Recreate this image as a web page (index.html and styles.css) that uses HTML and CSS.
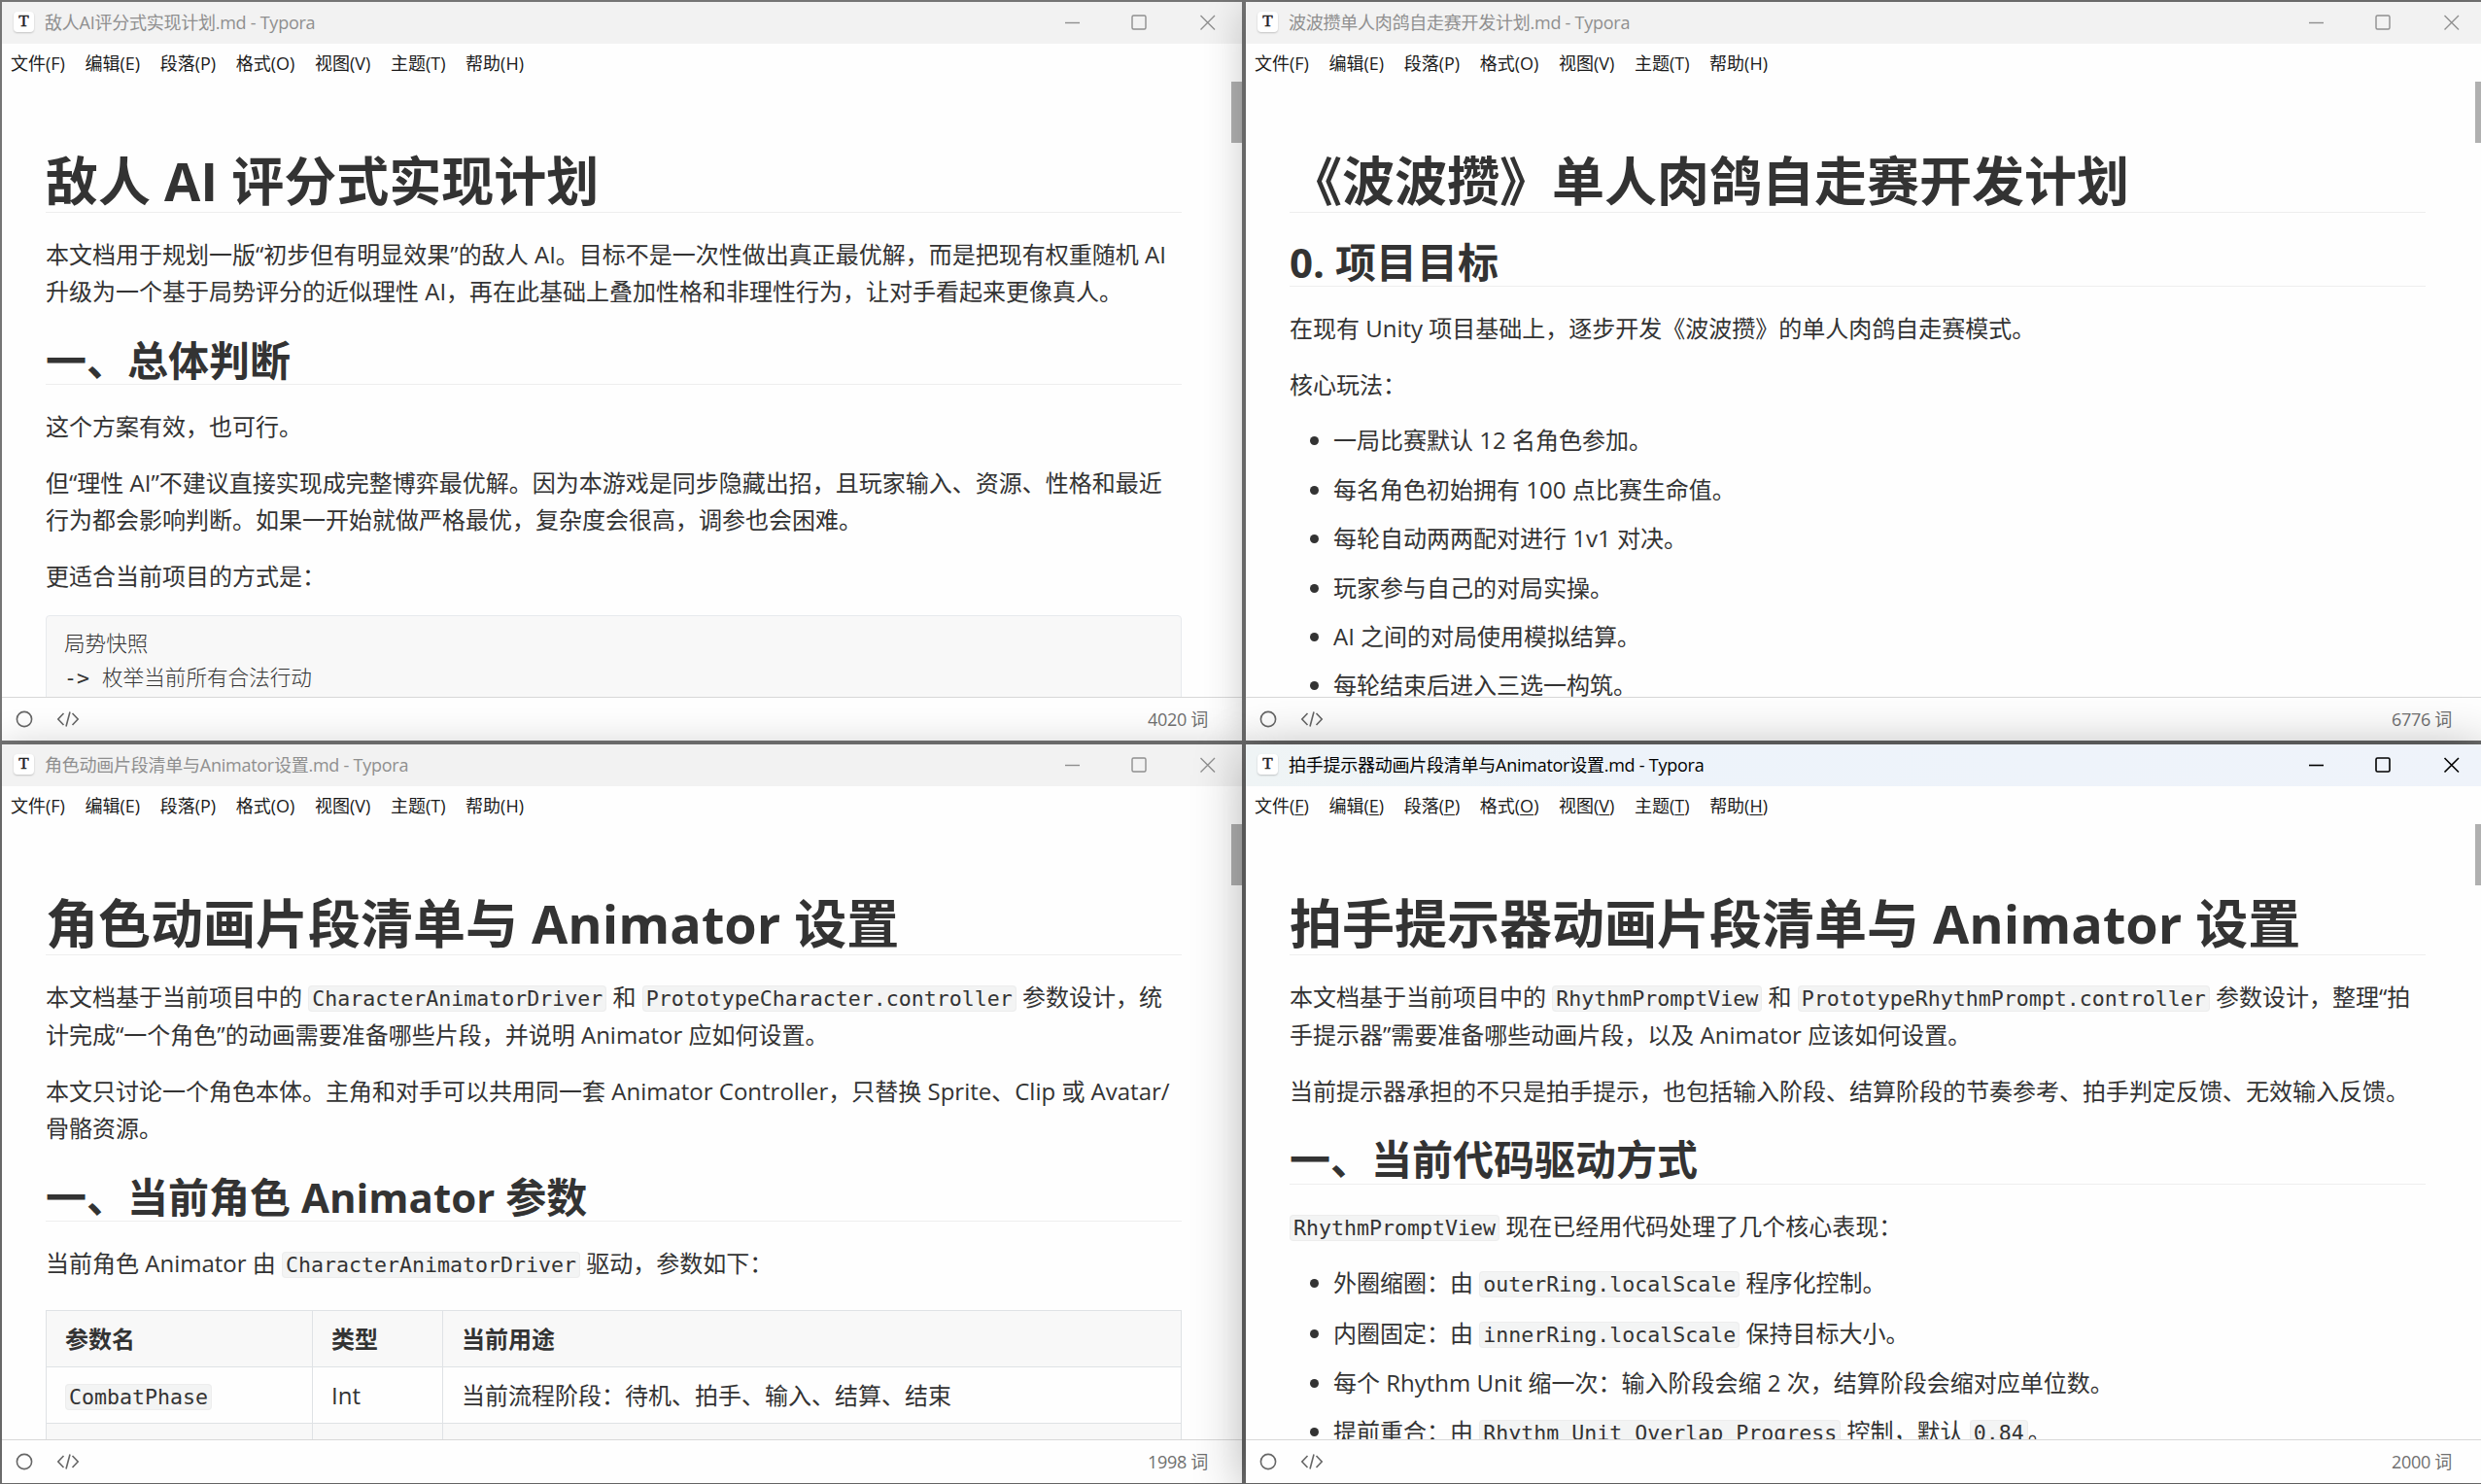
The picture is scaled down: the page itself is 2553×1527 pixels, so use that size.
FILE: index.html
```html
<!DOCTYPE html>
<html lang="zh-CN">
<head>
<meta charset="utf-8">
<title>Typora</title>
<link rel="stylesheet" href="styles.css">
</head>
<body>
<svg class="defs" aria-hidden="true">
  <symbol id="controls" viewBox="0 0 156 18"><path d="M1 9.500H16"/><rect x="70" y="2" width="14" height="14" rx="1.500"/><path d="M140.500 2L155 16.500M155 2L140.500 16.500"/></symbol>
  <symbol id="source" viewBox="0 0 24 18"><path d="M7.500 3L1.800 9L7.500 15M16.500 3L22.200 9L16.500 15M14 1.500L10 16.500"/></symbol>
  <symbol id="outline" viewBox="0 0 18 18"><circle cx="9" cy="9" r="7.600"/></symbol>
</svg>
<main class="desktop">
  <section class="window">
    <header class="titlebar"><span class="logo">T</span><span class="title">敌人AI评分式实现计划.md - Typora</span><svg class="controls"><use href="#controls"/></svg></header>
    <nav class="menu"><span>文件(F)</span><span>编辑(E)</span><span>段落(P)</span><span>格式(O)</span><span>视图(V)</span><span>主题(T)</span><span>帮助(H)</span></nav>
    <article class="write">
      <i class="scroll"></i>
      <h1>敌人 AI 评分式实现计划</h1>
      <p>本文档用于规划一版“初步但有明显效果”的敌人 AI。目标不是一次性做出真正最优解，而是把现有权重随机 AI<br>升级为一个基于局势评分的近似理性 AI，再在此基础上叠加性格和非理性行为，让对手看起来更像真人。</p>
      <h2>一、总体判断</h2>
      <p>这个方案有效，也可行。</p>
      <p>但“理性 AI”不建议直接实现成完整博弈最优解。因为本游戏是同步隐藏出招，且玩家输入、资源、性格和最近<br>行为都会影响判断。如果一开始就做严格最优，复杂度会很高，调参也会困难。</p>
      <p>更适合当前项目的方式是：</p>
      <pre>局势快照
-&gt; 枚举当前所有合法行动
</pre>
    </article>
    <footer class="status"><svg class="ring"><use href="#outline"/></svg><svg class="src"><use href="#source"/></svg><span class="count">4020 词</span></footer>
  </section>

  <section class="window second">
    <header class="titlebar"><span class="logo">T</span><span class="title">波波攒单人肉鸽自走赛开发计划.md - Typora</span><svg class="controls"><use href="#controls"/></svg></header>
    <nav class="menu"><span>文件(F)</span><span>编辑(E)</span><span>段落(P)</span><span>格式(O)</span><span>视图(V)</span><span>主题(T)</span><span>帮助(H)</span></nav>
    <article class="write">
      <i class="scroll"></i>
      <h1>《波波攒》单人肉鸽自走赛开发计划</h1>
      <h2>0. 项目目标</h2>
      <p>在现有 Unity 项目基础上，逐步开发《波波攒》的单人肉鸽自走赛模式。</p>
      <p>核心玩法：</p>
      <ul>
        <li>一局比赛默认 12 名角色参加。</li>
        <li>每名角色初始拥有 100 点比赛生命值。</li>
        <li>每轮自动两两配对进行 1v1 对决。</li>
        <li>玩家参与自己的对局实操。</li>
        <li>AI 之间的对局使用模拟结算。</li>
        <li>每轮结束后进入三选一构筑。</li>
      </ul>
    </article>
    <footer class="status"><svg class="ring"><use href="#outline"/></svg><svg class="src"><use href="#source"/></svg><span class="count">6776 词</span></footer>
  </section>

  <section class="window third">
    <header class="titlebar"><span class="logo">T</span><span class="title">角色动画片段清单与Animator设置.md - Typora</span><svg class="controls"><use href="#controls"/></svg></header>
    <nav class="menu"><span>文件(F)</span><span>编辑(E)</span><span>段落(P)</span><span>格式(O)</span><span>视图(V)</span><span>主题(T)</span><span>帮助(H)</span></nav>
    <article class="write">
      <i class="scroll"></i>
      <h1>角色动画片段清单与 Animator 设置</h1>
      <p>本文档基于当前项目中的 <code>CharacterAnimatorDriver</code> 和 <code>PrototypeCharacter.controller</code> 参数设计，统<br>计完成“一个角色”的动画需要准备哪些片段，并说明 Animator 应如何设置。</p>
      <p>本文只讨论一个角色本体。主角和对手可以共用同一套 Animator Controller，只替换 Sprite、Clip 或 Avatar/<br>骨骼资源。</p>
      <h2>一、当前角色 Animator 参数</h2>
      <p>当前角色 Animator 由 <code>CharacterAnimatorDriver</code> 驱动，参数如下：</p>
      <table>
        <colgroup><col class="c1"><col class="c2"><col></colgroup>
        <thead><tr><th>参数名</th><th>类型</th><th>当前用途</th></tr></thead>
        <tbody>
          <tr><td><code>CombatPhase</code></td><td>Int</td><td>当前流程阶段：待机、拍手、输入、结算、结束</td></tr>
          <tr><td></td><td></td><td></td></tr>
        </tbody>
      </table>
    </article>
    <footer class="status"><svg class="ring"><use href="#outline"/></svg><svg class="src"><use href="#source"/></svg><span class="count">1998 词</span></footer>
  </section>

  <section class="window active">
    <header class="titlebar"><span class="logo">T</span><span class="title">拍手提示器动画片段清单与Animator设置.md - Typora</span><svg class="controls"><use href="#controls"/></svg></header>
    <nav class="menu"><span>文件(<u>F</u>)</span><span>编辑(<u>E</u>)</span><span>段落(<u>P</u>)</span><span>格式(<u>O</u>)</span><span>视图(<u>V</u>)</span><span>主题(<u>T</u>)</span><span>帮助(<u>H</u>)</span></nav>
    <article class="write">
      <i class="scroll"></i>
      <h1>拍手提示器动画片段清单与 Animator 设置</h1>
      <p>本文档基于当前项目中的 <code>RhythmPromptView</code> 和 <code>PrototypeRhythmPrompt.controller</code> 参数设计，整理“拍<br>手提示器”需要准备哪些动画片段，以及 Animator 应该如何设置。</p>
      <p>当前提示器承担的不只是拍手提示，也包括输入阶段、结算阶段的节奏参考、拍手判定反馈、无效输入反馈。</p>
      <h2>一、当前代码驱动方式</h2>
      <p><code>RhythmPromptView</code> 现在已经用代码处理了几个核心表现：</p>
      <ul>
        <li>外圈缩圈：由 <code>outerRing.localScale</code> 程序化控制。</li>
        <li>内圈固定：由 <code>innerRing.localScale</code> 保持目标大小。</li>
        <li>每个 Rhythm Unit 缩一次：输入阶段会缩 2 次，结算阶段会缩对应单位数。</li>
        <li>提前重合：由 <code>Rhythm Unit Overlap Progress</code> 控制，默认 <code>0.84</code>。</li>
      </ul>
    </article>
    <footer class="status"><svg class="ring"><use href="#outline"/></svg><svg class="src"><use href="#source"/></svg><span class="count">2000 词</span></footer>
  </section>
</main>
</body>
</html>
```
FILE: styles.css
```css
* { box-sizing: border-box; }
html, body { margin: 0; height: 100%; overflow: hidden; }
body { background: #757575; font-family: "Open Sans", "Noto Sans CJK SC", sans-serif; }
.defs { display: none; }

.desktop {
  display: grid;
  grid-template: 760px 760px / 1276px 1276px;
  gap: 4px;
  width: 2553px;
  height: 1527px;
  padding: 2px 0 0 2px;
  overflow: hidden;
}

.window {
  position: relative;
  z-index: 1;
  display: flex;
  flex-direction: column;
  min-width: 0;
  min-height: 0;
  background: #fefefe;
  color: #333;
}
.second, .third { z-index: 2; box-shadow: 0 6px 40px rgba(0, 0, 0, .24); }
.active { z-index: 3; box-shadow: 0 6px 50px rgba(0, 0, 0, .32); }

.titlebar {
  display: flex;
  align-items: center;
  flex: none;
  height: 43px;
  padding: 0 27px 2px 12px;
  background: #f2f2f2;
  color: #8f8f8f;
  font-size: 18px;
}
.active .titlebar { background: linear-gradient(90deg, #eff4f5, #edf3fa 30%, #eff3fa); color: #000; }
.logo {
  width: 21px;
  height: 21px;
  margin-right: 11px;
  border-radius: 4px;
  background: #fff;
  box-shadow: 0 1px 2px rgba(0, 0, 0, .2);
  color: #222;
  font: 17px/20px "Liberation Serif", serif;
  -webkit-text-stroke: .5px #222;
  text-align: center;
}
.title { flex: 1; margin-top: -2px; letter-spacing: -.25px; white-space: nowrap; }
.controls { width: 156px; height: 18px; fill: none; stroke: #8f8f8f; stroke-width: 1.4; }
.active .controls { stroke: #000; stroke-width: 1.6; }

.menu {
  display: flex;
  flex: none;
  gap: 20.6px;
  height: 39px;
  padding-left: 9px;
  line-height: 40px;
  color: #1a1a1a;
  font-size: 18px;
  white-space: nowrap;
}
.menu u { text-underline-offset: 2px; }

.write {
  position: relative;
  flex: 1;
  min-height: 0;
  overflow: hidden;
  padding: 45px 62px 0 45px;
  font-size: 24px;
  line-height: 1.6;
}
.scroll { position: absolute; top: 0; right: 0; width: 11px; height: 63px; background: #b0b0b0; }
h1, h2 { padding-top: 2px; border-bottom: 1px solid #eee; white-space: nowrap; }
h1 { margin: 24px 0; font-size: 54px; line-height: 62.8px; }
h2 { margin: 24px 0; font-size: 42px; line-height: 49.45px; }
p { margin: 19.2px 0; white-space: nowrap; }
ul { margin: 19.2px 0; padding-left: 45px; }
li { white-space: nowrap; }
li + li { margin-top: 12px; }

code, pre { font-family: "DejaVu Sans Mono", "Noto Sans CJK SC", monospace; font-size: 21.6px; }
code {
  padding: 0 3px;
  border: 1px solid #ededed;
  border-radius: 4px;
  background: #f3f4f4;
  line-height: 37.4px;
}
pre {
  margin: 21px 0;
  padding: 12px 18px;
  border: 1px solid #e7eaed;
  border-radius: 4px;
  background: #f8f8f8;
  font-weight: 300;
}
table {
  width: 100%;
  margin-top: 28px;
  border-collapse: collapse;
  table-layout: fixed;
}
.c1 { width: 274px; }
.c2 { width: 134px; }
th, td { height: 58px; padding: 0 19px; border: 1px solid #dfe2e5; text-align: left; }
th, tbody tr:nth-child(2n) { background: #f8f8f8; }
td code { line-height: 30px; }

.status {
  display: flex;
  align-items: center;
  flex: none;
  height: 45px;
  padding: 0 35px 0 14px;
  border-top: 1px solid #d8d8d8;
  color: #707070;
  font-size: 18px;
}
.ring { width: 18px; height: 18px; margin-right: 24px; fill: none; stroke: #666; stroke-width: 1.6; }
.src { width: 24px; height: 18px; fill: none; stroke: #666; stroke-width: 1.6; }
.count { margin: -2px 0 0 auto; letter-spacing: -.3px; }
```
